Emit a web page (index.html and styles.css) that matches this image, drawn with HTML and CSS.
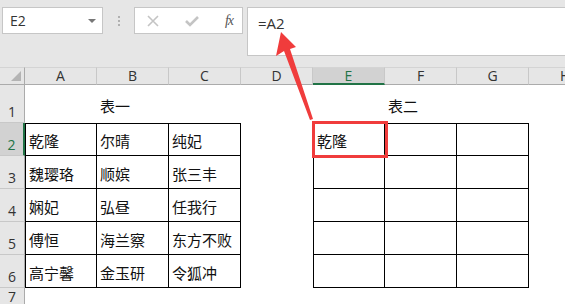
FILE: index.html
```html
<!DOCTYPE html>
<html lang="zh">
<head>
<meta charset="utf-8">
<link rel="stylesheet" href="styles.css">
</head>
<body>
<div class="app">
  <div class="toolbar">
    <div class="namebox"><span>E2</span><span class="caret"></span></div>
    <div class="dots"><i></i><i></i><i></i></div>
    <div class="fbtns">
      <span class="fb x">
        <svg width="14" height="14" viewBox="0 0 14 14"><path d="M2 2 L12 12 M12 2 L2 12" stroke="#c4c4c4" stroke-width="1.6" fill="none"/></svg>
      </span>
      <span class="fb ok">
        <svg width="16" height="14" viewBox="0 0 16 14"><path d="M2 7 L6 11 L14 3" stroke="#c4c4c4" stroke-width="2.6" fill="none"/></svg>
      </span>
      <span class="fb fx">fx</span>
    </div>
    <div class="formula">=A2</div>
  </div>
  <div class="sheet">
    <div class="corner"><span class="tri"></span></div>
    <div class="ch">A</div><div class="ch">B</div><div class="ch">C</div><div class="ch">D</div>
    <div class="ch sel">E</div><div class="ch">F</div><div class="ch">G</div><div class="ch last">H</div>

    <div class="rh">1</div>
    <div class="c"></div><div class="c">表一</div><div class="c"></div><div class="c"></div>
    <div class="c"></div><div class="c">表二</div><div class="c"></div><div class="c"></div>

    <div class="rh sel">2</div>
    <div class="c t l tp">乾隆</div><div class="c t tp">尔晴</div><div class="c t tp">纯妃</div><div class="c"></div>
    <div class="c t l tp">乾隆</div><div class="c t tp"></div><div class="c t tp"></div><div class="c"></div>

    <div class="rh">3</div>
    <div class="c t l">魏璎珞</div><div class="c t">顺嫔</div><div class="c t">张三丰</div><div class="c"></div>
    <div class="c t l"></div><div class="c t"></div><div class="c t"></div><div class="c"></div>

    <div class="rh">4</div>
    <div class="c t l">娴妃</div><div class="c t">弘昼</div><div class="c t">任我行</div><div class="c"></div>
    <div class="c t l"></div><div class="c t"></div><div class="c t"></div><div class="c"></div>

    <div class="rh">5</div>
    <div class="c t l">傅恒</div><div class="c t">海兰察</div><div class="c t">东方不败</div><div class="c"></div>
    <div class="c t l"></div><div class="c t"></div><div class="c t"></div><div class="c"></div>

    <div class="rh">6</div>
    <div class="c t l">高宁馨</div><div class="c t">金玉研</div><div class="c t">令狐冲</div><div class="c"></div>
    <div class="c t l"></div><div class="c t"></div><div class="c t"></div><div class="c"></div>

    <div class="rh r7">7</div>
    <div class="c"></div><div class="c"></div><div class="c"></div><div class="c"></div>
    <div class="c"></div><div class="c"></div><div class="c"></div><div class="c"></div>
  </div>

  <div class="selbox"><span class="handle"></span></div>
  <div class="callout"></div>
  <svg class="arrow" width="565" height="304" viewBox="0 0 565 304">
    <polygon points="281,32 296,47 290,49 313,119 310,120 284,51 276,56" fill="#f03c3c"/>
  </svg>
</div>
</body>
</html>
```
FILE: styles.css
```css
* { box-sizing: border-box; }
html, body { margin: 0; padding: 0; background: #ffffff; }
.app {
  position: relative;
  width: 565px;
  height: 304px;
  overflow: hidden;
  font-family: "Noto Sans CJK SC", "Noto Sans", sans-serif;
}
.toolbar {
  height: 67px;
  background: #e6e6e6;
  display: flex;
  align-items: flex-start;
  padding: 7px 0 0 2px;
}
.namebox {
  width: 101px;
  height: 27px;
  background: #fff;
  border: 1px solid #c6c6c6;
  display: flex;
  align-items: center;
  justify-content: space-between;
  padding: 0 6px 0 7px;
  font-family: "Open Sans", "Liberation Sans", sans-serif;
  font-size: 14px;
  color: #333;
}
.caret {
  width: 0; height: 0;
  border-left: 4px solid transparent;
  border-right: 4px solid transparent;
  border-top: 4px solid #777;
  margin-top: 1px;
}
.dots {
  width: 31px;
  height: 27px;
  display: flex;
  flex-direction: column;
  align-items: center;
  justify-content: center;
  gap: 2px;
}
.dots i {
  display: block;
  width: 2px;
  height: 2px;
  background: #b0b0b0;
}
.fbtns {
  width: 109px;
  height: 27px;
  background: #fff;
  border: 1px solid #c6c6c6;
  display: flex;
  align-items: center;
  justify-content: space-between;
  padding: 0 9px 0 11px;
}
.fb { display: flex; align-items: center; justify-content: center; }
.fx {
  font-family: "Liberation Serif", "DejaVu Serif", serif;
  font-style: italic;
  font-size: 14px;
  color: #555;
  letter-spacing: -1px;
}
.formula {
  margin-left: 4px;
  flex: 1;
  height: 49px;
  background: #fff;
  border: 1px solid #c6c6c6;
  border-right: none;
  padding: 5px 0 0 10px;
  font-family: "Open Sans", "Liberation Sans", sans-serif;
  font-size: 15px;
  color: #333;
}
.sheet {
  display: grid;
  grid-template-columns: 25px repeat(7, 72px) 1fr;
  grid-template-rows: 18px 38px repeat(5, 33px) 18px;
}
.corner {
  background: #e6e6e6;
  border-right: 1px solid #ababab;
  border-bottom: 1px solid #ababab;
  border-top: 1px solid #d4d4d4;
  position: relative;
}
.tri {
  position: absolute;
  right: 3px;
  bottom: 3px;
  width: 0; height: 0;
  border-left: 10px solid transparent;
  border-bottom: 10px solid #b4b4b4;
}
.ch {
  background: #e6e6e6;
  border-top: 1px solid #d4d4d4;
  border-right: 1px solid #c8c8c8;
  border-bottom: 1px solid #ababab;
  display: flex;
  align-items: center;
  justify-content: center;
  font-family: "Open Sans", "Liberation Sans", sans-serif;
  font-size: 14px;
  color: #333;
  line-height: 1;
}
.ch.last { border-right: none; justify-content: flex-start; padding-left: 31px; }
.ch.sel {
  background: #d2d2d2;
  border-bottom: 2px solid #217346;
  color: #217346;
}
.rh {
  background: #e6e6e6;
  border-right: 1px solid #ababab;
  border-bottom: 1px solid #c8c8c8;
  display: flex;
  align-items: flex-end;
  justify-content: center;
  padding-bottom: 1px;
  font-family: "Open Sans", "Liberation Sans", sans-serif;
  font-size: 14px;
  color: #333;
  line-height: 1.2;
}
.rh.r7 { align-items: flex-start; padding-top: 1px; }
.rh.sel {
  background: #d2d2d2;
  border-right: 2px solid #217346;
  color: #217346;
}
.c {
  background: #fff;
  display: flex;
  align-items: center;
  padding: 2px 0 0 3px;
  font-size: 15px;
  color: #111;
  white-space: nowrap;
  line-height: 1;
}
.c.t {
  border-right: 1px solid #000;
  border-bottom: 1px solid #000;
}
.c.t.l { border-left: 1px solid #000; }
.c.t.tp { border-top: 1px solid #000; }
.selbox {
  position: absolute;
  left: 313px;
  top: 122px;
  width: 73px;
  height: 35px;
  border-bottom: 2px solid #217346;
}
.selbox .handle {
  position: absolute;
  right: -2px;
  bottom: -3px;
  width: 4px;
  height: 4px;
  background: #217346;
}
.callout {
  position: absolute;
  left: 312px;
  top: 121px;
  width: 76px;
  height: 37px;
  border: 3px solid #f03c3c;
}
.arrow {
  position: absolute;
  left: 0;
  top: 0;
  pointer-events: none;
}
```
